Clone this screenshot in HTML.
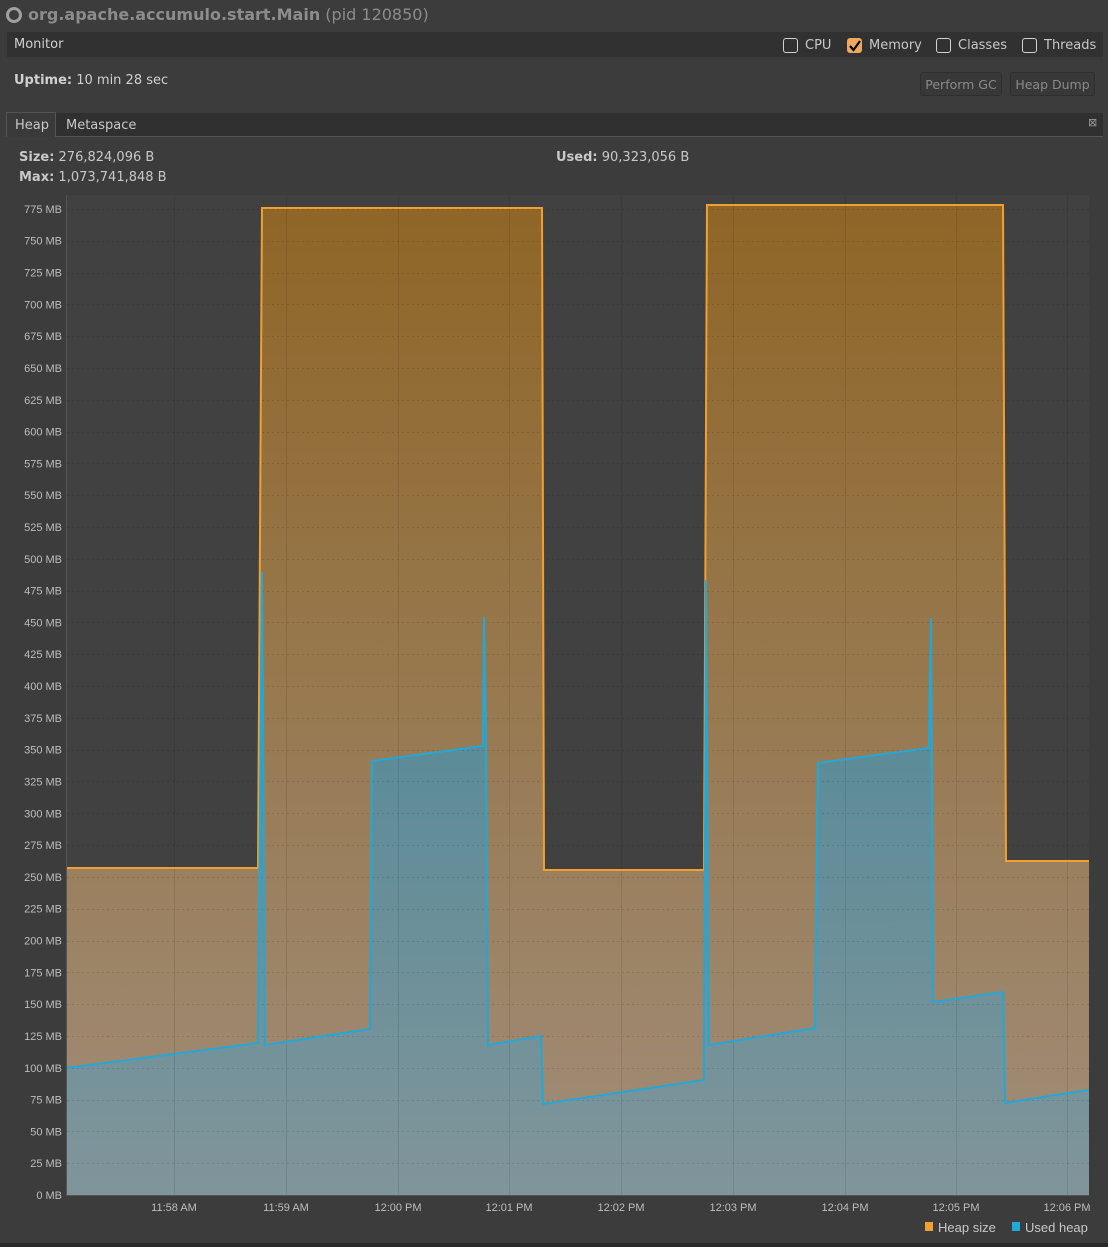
<!DOCTYPE html>
<html><head><meta charset="utf-8"><style>
body{margin:0;width:1108px;height:1247px;background:#3c3c3c;font-family:"DejaVu Sans","Liberation Sans",sans-serif;color:#c8c8c8;position:relative;overflow:hidden}
.a{position:absolute;white-space:nowrap}
.cb{position:absolute;width:13px;height:13px;border:1px solid #d0d0d0;border-radius:3px;top:38px}
.btn{position:absolute;top:72px;height:24px;border:1px solid #2e2e2e;background:#383838;border-radius:3px;color:#8a8a8a;font-size:12.5px;line-height:24px;padding:0 3px;box-sizing:border-box;white-space:nowrap;overflow:hidden;text-align:center}
</style></head><body>
<div class="a" style="left:6px;top:7px;width:10px;height:10px;border:3px solid #a0a0a0;border-radius:50%"></div>
<div class="a" style="left:28px;top:5px;font-size:16px;color:#8c8c8c"><b>org.apache.accumulo.start.Main</b> (pid 120850)</div>
<div class="a" style="left:7px;top:32px;width:1096px;height:25px;background:#313131"></div>
<div class="a" style="left:14px;top:37px;font-size:13px;color:#d0d0d0">Monitor</div>
<div class="cb" style="left:783px"></div><div class="a" style="left:805px;top:38px;font-size:13px">CPU</div>
<div class="cb" style="left:847px;background:#f0a860;border-color:#f0a860"></div>
<svg class="a" style="left:849px;top:40px" width="12" height="12"><path d="M1,6 L4.5,10 L11,1" fill="none" stroke="#000" stroke-width="2.2"/></svg>
<div class="a" style="left:869px;top:38px;font-size:13px">Memory</div>
<div class="cb" style="left:936px"></div><div class="a" style="left:958px;top:38px;font-size:13px">Classes</div>
<div class="cb" style="left:1022px"></div><div class="a" style="left:1044px;top:38px;font-size:13px">Threads</div>
<div class="a" style="left:14px;top:73px;font-size:13px;color:#d0d0d0"><b>Uptime:</b> 10 min 28 sec</div>
<div class="btn" style="left:920px;width:82px">Perform GC</div>
<div class="btn" style="left:1010px;width:85px">Heap Dump</div>
<div class="a" style="left:6px;top:113px;width:1097px;height:23px;background:#303030;border-bottom:1px solid #555"></div>
<div class="a" style="left:6px;top:112px;width:48px;height:24px;background:#3a3a3a;border:1px solid #555;border-bottom:none"></div>
<div class="a" style="left:15px;top:118px;font-size:13px">Heap</div>
<div class="a" style="left:66px;top:118px;font-size:13px">Metaspace</div>
<div class="a" style="left:1088px;top:116px;font-size:11px;color:#999">⊠</div>
<div class="a" style="left:19px;top:150px;font-size:13px"><b>Size:</b> 276,824,096 B</div>
<div class="a" style="left:19px;top:170px;font-size:13px"><b>Max:</b> 1,073,741,848 B</div>
<div class="a" style="left:556px;top:150px;font-size:13px"><b>Used:</b> 90,323,056 B</div>
<svg class="a" style="left:0;top:0" width="1108" height="1247">
<defs>
<linearGradient id="og" x1="0" y1="195" x2="0" y2="1195" gradientUnits="userSpaceOnUse"><stop offset="0" stop-color="#8f6526"/><stop offset="1" stop-color="#a08d7a"/></linearGradient>
<linearGradient id="bg" x1="0" y1="570" x2="0" y2="1195" gradientUnits="userSpaceOnUse"><stop offset="0" stop-color="#4d8898"/><stop offset="1" stop-color="#80959a"/></linearGradient>
</defs>
<rect x="67" y="195" width="1022" height="1000" fill="#414141"/>
<path d="M67,868 L258,868 L262,208 L542,208 L544,870 L704,870 L707,205 L1003,205 L1006,861 L1089,861 L1089,1195 L67,1195Z" fill="url(#og)"/>
<path d="M67,1068 L258,1043 L262,572 L265,1045 L370,1029 L372,761 L483,746 L484,617 L486,750 L488,1045 L541,1036 L543,1104 L704,1080 L706,580 L709,1045 L815,1028 L818,763 L929,748 L931,618 L933,1002 L1003,992 L1005,1103 L1089,1090 L1089,1195 L67,1195Z" fill="url(#bg)"/>
<g stroke="rgba(0,0,0,0.09)" stroke-width="1">
<line x1="174.5" y1="195" x2="174.5" y2="1195"/><line x1="286.5" y1="195" x2="286.5" y2="1195"/><line x1="398.5" y1="195" x2="398.5" y2="1195"/><line x1="509.5" y1="195" x2="509.5" y2="1195"/><line x1="621.5" y1="195" x2="621.5" y2="1195"/><line x1="733.5" y1="195" x2="733.5" y2="1195"/><line x1="845.5" y1="195" x2="845.5" y2="1195"/><line x1="956.5" y1="195" x2="956.5" y2="1195"/><line x1="1067.5" y1="195" x2="1067.5" y2="1195"/>
</g>
<g id="hl" stroke="rgba(0,0,0,0.12)" stroke-dasharray="2,3"></g>
<path d="M67,868 L258,868 L262,208 L542,208 L544,870 L704,870 L707,205 L1003,205 L1006,861 L1089,861" fill="none" stroke="#f0a030" stroke-width="2"/>
<path d="M67,1068 L258,1043 L262,572 L265,1045 L370,1029 L372,761 L483,746 L484,617 L486,750 L488,1045 L541,1036 L543,1104 L704,1080 L706,580 L709,1045 L815,1028 L818,763 L929,748 L931,618 L933,1002 L1003,992 L1005,1103 L1089,1090" fill="none" stroke="#22a8d8" stroke-width="2"/>
<line x1="67" y1="1195.5" x2="1089" y2="1195.5" stroke="#555"/>
<line x1="66.5" y1="195" x2="66.5" y2="1196" stroke="#555"/>
<g font-size="11" fill="#bdbdbd" text-anchor="end" font-family="Liberation Sans Narrow, Liberation Sans, sans-serif" id="yl"></g>
<g font-size="11" fill="#bdbdbd" text-anchor="middle" font-family="Liberation Sans Narrow, Liberation Sans, sans-serif">
<text x="174" y="1211">11:58 AM</text><text x="286" y="1211">11:59 AM</text><text x="398" y="1211">12:00 PM</text><text x="509" y="1211">12:01 PM</text><text x="621" y="1211">12:02 PM</text><text x="733" y="1211">12:03 PM</text><text x="845" y="1211">12:04 PM</text><text x="956" y="1211">12:05 PM</text><text x="1067" y="1211">12:06 PM</text>
</g>
<rect x="925" y="1222" width="8" height="9" fill="#f0a030"/><text x="938" y="1232" font-size="13" fill="#c8c8c8" font-family="Liberation Sans Narrow, Liberation Sans, sans-serif">Heap size</text>
<rect x="1012" y="1222" width="8" height="9" fill="#22a8d8"/><text x="1025" y="1232" font-size="13" fill="#c8c8c8" font-family="Liberation Sans Narrow, Liberation Sans, sans-serif">Used heap</text>
<rect x="1089" y="195" width="19" height="1010" fill="#3c3c3c"/>
<rect x="0" y="1243" width="1108" height="4" fill="#2a2a2a"/>
</svg>
<script>
var yl=document.getElementById('yl'),hl=document.getElementById('hl'),ns='http://www.w3.org/2000/svg';
for(var i=0;i<=31;i++){var y=1195-i*31.81;var t=document.createElementNS(ns,'text');t.setAttribute('x',62);t.setAttribute('y',y+4);t.textContent=(i*25)+' MB';yl.appendChild(t);
var l=document.createElementNS(ns,'line');l.setAttribute('x1',67);l.setAttribute('x2',1089);l.setAttribute('y1',Math.round(y)+.5);l.setAttribute('y2',Math.round(y)+.5);hl.appendChild(l);}
</script>
</body></html>
